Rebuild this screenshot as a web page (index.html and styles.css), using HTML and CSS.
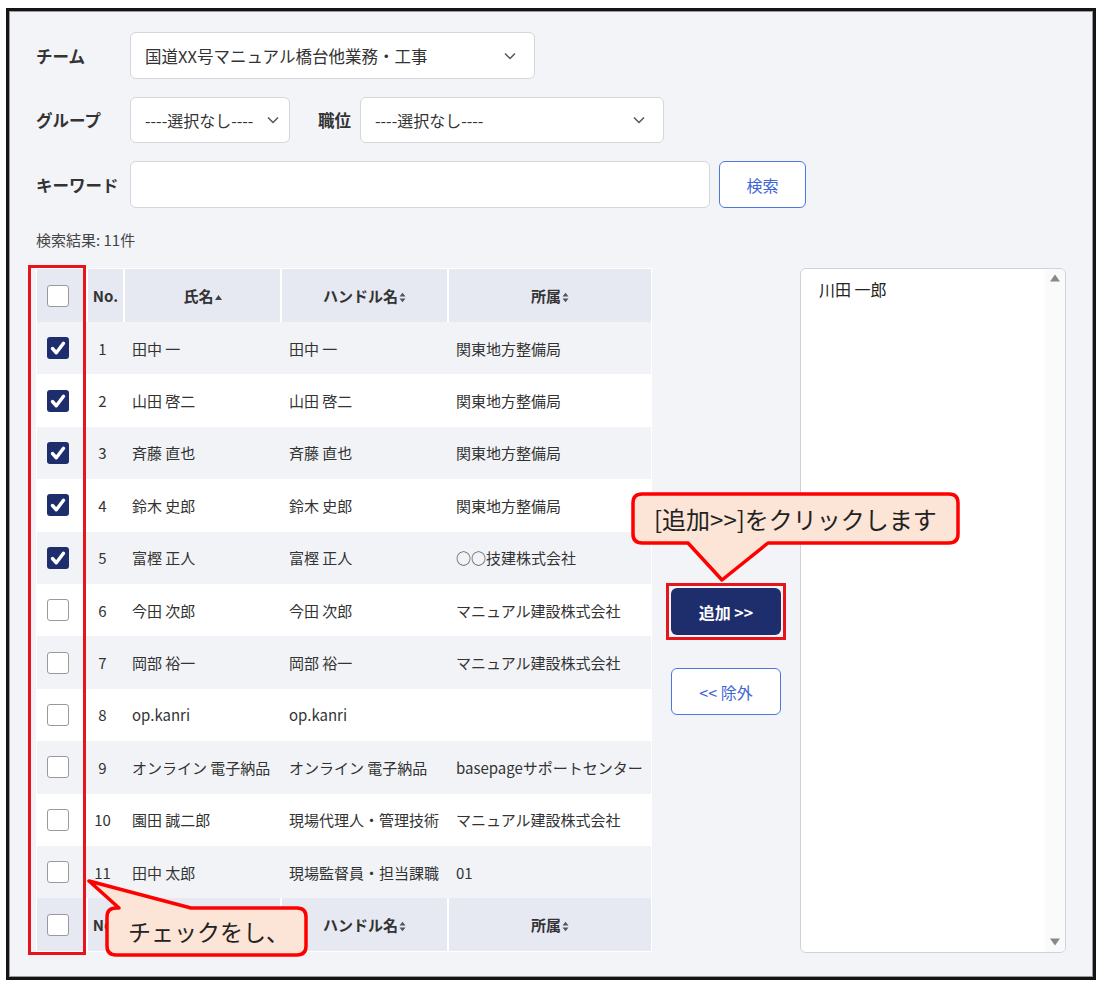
FILE: index.html
```html
<!DOCTYPE html>
<html lang="ja">
<head>
    <meta charset="UTF-8">
    <meta name="viewport" content="width=device-width, initial-scale=1.0">
    <title>メンバー選択</title>
    <link rel="stylesheet" href="styles.css">
</head>
<body>
    <div class="frame">
        <div class="form-row">
            <label class="label">チーム</label>
            <div class="select select-team">
                <span>国道XX号マニュアル橋台他業務・工事</span>
                <svg class="chevron" width="12" height="8" viewBox="0 0 12 8"><path d="M1 1.5 L6 6.5 L11 1.5" fill="none" stroke="#555" stroke-width="1.5"/></svg>
            </div>
        </div>
        <div class="form-row">
            <label class="label">グループ</label>
            <div class="select select-group">
                <span>----選択なし----</span>
                <svg class="chevron" width="12" height="8" viewBox="0 0 12 8"><path d="M1 1.5 L6 6.5 L11 1.5" fill="none" stroke="#555" stroke-width="1.5"/></svg>
            </div>
            <label class="label label-inline">職位</label>
            <div class="select select-post">
                <span>----選択なし----</span>
                <svg class="chevron" width="12" height="8" viewBox="0 0 12 8"><path d="M1 1.5 L6 6.5 L11 1.5" fill="none" stroke="#555" stroke-width="1.5"/></svg>
            </div>
        </div>
        <div class="form-row">
            <label class="label">キーワード</label>
            <div class="input"></div>
            <button class="btn-outline btn-search">検索</button>
        </div>

        <div class="result-count">検索結果: 11件</div>

        <div class="picker">
            <div class="table-wrap">
                <table class="member-table">
                    <thead>
                        <tr>
                            <th class="col-check"><span class="checkbox"></span></th>
                            <th class="col-no">No.</th>
                            <th class="col-name">氏名<svg class="sort" width="7" height="11" viewBox="0 0 7 11"><path d="M0 8 L3.5 3 L7 8Z" fill="#444"/></svg></th>
                            <th class="col-handle">ハンドル名<svg class="sort" width="7" height="11" viewBox="0 0 7 11"><path d="M0.5 4.5 L3.5 0.8 L6.5 4.5Z M0.5 6.5 L3.5 10.2 L6.5 6.5Z" fill="#555"/></svg></th>
                            <th class="col-org">所属<svg class="sort" width="7" height="11" viewBox="0 0 7 11"><path d="M0.5 4.5 L3.5 0.8 L6.5 4.5Z M0.5 6.5 L3.5 10.2 L6.5 6.5Z" fill="#555"/></svg></th>
                        </tr>
                    </thead>
                    <tbody>
                        <tr><td><span class="checkbox checked"></span></td><td class="no">1</td><td>田中 一</td><td>田中 一</td><td>関東地方整備局</td></tr>
                        <tr><td><span class="checkbox checked"></span></td><td class="no">2</td><td>山田 啓二</td><td>山田 啓二</td><td>関東地方整備局</td></tr>
                        <tr><td><span class="checkbox checked"></span></td><td class="no">3</td><td>斉藤 直也</td><td>斉藤 直也</td><td>関東地方整備局</td></tr>
                        <tr><td><span class="checkbox checked"></span></td><td class="no">4</td><td>鈴木 史郎</td><td>鈴木 史郎</td><td>関東地方整備局</td></tr>
                        <tr><td><span class="checkbox checked"></span></td><td class="no">5</td><td>富樫 正人</td><td>富樫 正人</td><td>○○技建株式会社</td></tr>
                        <tr><td><span class="checkbox"></span></td><td class="no">6</td><td>今田 次郎</td><td>今田 次郎</td><td>マニュアル建設株式会社</td></tr>
                        <tr><td><span class="checkbox"></span></td><td class="no">7</td><td>岡部 裕一</td><td>岡部 裕一</td><td>マニュアル建設株式会社</td></tr>
                        <tr><td><span class="checkbox"></span></td><td class="no">8</td><td>op.kanri</td><td>op.kanri</td><td></td></tr>
                        <tr><td><span class="checkbox"></span></td><td class="no">9</td><td>オンライン 電子納品</td><td>オンライン 電子納品</td><td>basepageサポートセンター</td></tr>
                        <tr><td><span class="checkbox"></span></td><td class="no">10</td><td>園田 誠二郎</td><td>現場代理人・管理技術</td><td>マニュアル建設株式会社</td></tr>
                        <tr><td><span class="checkbox"></span></td><td class="no">11</td><td>田中 太郎</td><td>現場監督員・担当課職</td><td>01</td></tr>
                    </tbody>
                    <tfoot>
                        <tr>
                            <th class="col-check"><span class="checkbox"></span></th>
                            <th class="col-no">No.</th>
                            <th class="col-name">氏名<svg class="sort" width="7" height="11" viewBox="0 0 7 11"><path d="M0 8 L3.5 3 L7 8Z" fill="#444"/></svg></th>
                            <th class="col-handle">ハンドル名<svg class="sort" width="7" height="11" viewBox="0 0 7 11"><path d="M0.5 4.5 L3.5 0.8 L6.5 4.5Z M0.5 6.5 L3.5 10.2 L6.5 6.5Z" fill="#555"/></svg></th>
                            <th class="col-org">所属<svg class="sort" width="7" height="11" viewBox="0 0 7 11"><path d="M0.5 4.5 L3.5 0.8 L6.5 4.5Z M0.5 6.5 L3.5 10.2 L6.5 6.5Z" fill="#555"/></svg></th>
                        </tr>
                    </tfoot>
                </table>
                <div class="mark-column"></div>
            </div>

            <div class="move-buttons">
                <div class="mark-button">
                    <button class="btn-primary">追加 &gt;&gt;</button>
                </div>
                <button class="btn-outline btn-remove">&lt;&lt; 除外</button>
            </div>

            <div class="selected-list">
                <div class="selected-items">
                    <div class="selected-item">川田 一郎</div>
                </div>
                <div class="scroll-bar">
                    <svg width="10" height="8" viewBox="0 0 10 8"><path d="M0 7.5 L5 0.5 L10 7.5Z" fill="#888"/></svg>
                    <svg width="10" height="8" viewBox="0 0 10 8"><path d="M0 0.5 L5 7.5 L10 0.5Z" fill="#888"/></svg>
                </div>
            </div>
        </div>

        <div class="callout callout-add">
            <svg class="callout-shape" width="332" height="94" viewBox="0 0 332 94">
                <path d="M12 3 H319 Q328 3 328 12 V43 Q328 52 319 52 H138 L92 89 L58 52 H12 Q3 52 3 43 V12 Q3 3 12 3 Z" fill="#fce4d6" stroke="#ff0000" stroke-width="3.5" stroke-linejoin="round"/>
            </svg>
            <div class="callout-text">[追加&gt;&gt;]をクリックします</div>
        </div>

        <div class="callout callout-check">
            <svg class="callout-shape" width="226" height="82" viewBox="0 0 226 82">
                <path d="M31 31 H34 L4 4 L106 31 H212 Q221 31 221 40 V69 Q221 78 212 78 H31 Q22 78 22 69 V40 Q22 31 31 31 Z" fill="#fce4d6" stroke="#ff0000" stroke-width="3.5" stroke-linejoin="round"/>
            </svg>
            <div class="callout-text">チェックをし、</div>
        </div>
    </div>
</body>
</html>
```

FILE: styles.css
```css
* {
    margin: 0;
    padding: 0;
    box-sizing: border-box;
}

body {
    font-family: "Noto Sans CJK JP", "Noto Sans", sans-serif;
    background-color: #fff;
    color: #333;
}

.frame {
    position: relative;
    width: 1090px;
    height: 972px;
    margin: 8px 0 0 6px;
    padding: 21px 27px 0 27px;
    border: 3px solid #141414;
    box-shadow: inset 0 0 0 1px #9a9a9a;
    background-color: #f3f4f8;
}

.form-row {
    display: flex;
    align-items: center;
    margin-bottom: 18px;
}

.label {
    width: 94px;
    font-size: 16.5px;
    font-weight: bold;
    color: #333;
}

.label-inline {
    width: auto;
    margin: 0 9px 0 28px;
}

.select {
    display: flex;
    align-items: center;
    justify-content: space-between;
    height: 47px;
    padding: 0 18px 0 14px;
    background-color: #fff;
    border: 1px solid #d3d6dc;
    border-radius: 6px;
    font-size: 16.5px;
    color: #333;
}

.select-team {
    width: 405px;
}

.select-group {
    width: 160px;
    height: 46px;
    padding-right: 10px;
    font-size: 16px;
}

.select-post {
    width: 304px;
    height: 46px;
    font-size: 16px;
}

.input {
    width: 580px;
    height: 47px;
    background-color: #fff;
    border: 1px solid #d3d6dc;
    border-radius: 6px;
}

.btn-outline {
    height: 47px;
    background-color: #fff;
    border: 1px solid #4c77e3;
    border-radius: 6px;
    color: #3f66d6;
    font-family: inherit;
    font-size: 16px;
}

.btn-search {
    width: 87px;
    margin-left: 9px;
}

.result-count {
    margin-top: 22px;
    line-height: 20px;
    font-size: 15px;
    color: #444;
}

.picker {
    display: flex;
    align-items: flex-start;
    margin-top: 18px;
}

.table-wrap {
    position: relative;
    width: 616px;
}

.member-table {
    width: 616px;
    table-layout: fixed;
    border-collapse: separate;
    border-spacing: 0;
    border: 1px solid #fff;
    font-size: 15px;
}

.member-table th {
    height: 53px;
    background-color: #e6e9f2;
    font-weight: bold;
    color: #333;
    text-align: center;
    vertical-align: middle;
}

.member-table th + th {
    border-left: 2px solid #fff;
}

.member-table td {
    height: 52.4px;
    padding: 0 9px;
    vertical-align: middle;
    white-space: nowrap;
    overflow: hidden;
}

.member-table tbody tr:nth-child(odd) {
    background-color: #f2f3f7;
}

.member-table tbody tr:nth-child(even) {
    background-color: #fff;
}

.col-check {
    width: 49px;
}

.col-no {
    width: 37px;
}

.col-name {
    width: 157px;
}

.col-handle {
    width: 167px;
}

.col-org {
    width: 204px;
}

.member-table th.col-check,
.member-table td:first-child {
    padding: 0 0 0 10px;
    text-align: left;
}

.member-table td.no {
    padding: 0 4px 0 0;
    text-align: center;
}

.sort {
    margin-left: 1px;
    vertical-align: -1px;
}

.checkbox {
    display: block;
    width: 22px;
    height: 22px;
    background-color: #fff;
    border: 1.5px solid #9a9a9a;
    border-radius: 3px;
}

.checkbox.checked {
    border: none;
    background: #1e2d6c url("data:image/svg+xml,%3Csvg xmlns='http://www.w3.org/2000/svg' width='22' height='22' viewBox='0 0 22 22'%3E%3Cpath d='M5.5 11.5 L9.3 15.8 L16.5 6.3' fill='none' stroke='white' stroke-width='3.4' stroke-linecap='round' stroke-linejoin='round'/%3E%3C/svg%3E") no-repeat center;
}

.mark-column {
    position: absolute;
    left: -8px;
    top: -3px;
    width: 58px;
    height: 690px;
    border: 3px solid #e8141c;
}

.move-buttons {
    display: flex;
    flex-direction: column;
    align-items: center;
    width: 148px;
    padding-top: 315px;
}

.mark-button {
    padding: 2px;
    border: 3px solid #e8141c;
}

.btn-primary {
    display: block;
    width: 110px;
    height: 47px;
    background-color: #1e2d6c;
    border: none;
    border-radius: 6px;
    color: #fff;
    font-family: inherit;
    font-size: 16px;
    font-weight: bold;
}

.btn-remove {
    width: 110px;
    margin-top: 28px;
    font-size: 16px;
}

.selected-list {
    display: flex;
    width: 266px;
    height: 685px;
    background-color: #fff;
    border: 1px solid #cfd2d8;
    border-radius: 6px;
    overflow: hidden;
}

.selected-items {
    flex: 1;
    padding: 9px 18px;
}

.selected-item {
    font-size: 16px;
    line-height: 22px;
    color: #222;
}

.scroll-bar {
    display: flex;
    flex-direction: column;
    justify-content: space-between;
    align-items: center;
    width: 20px;
    padding: 5px 0 6px;
    background-color: #fafafa;
}

.callout {
    position: absolute;
}

.callout-shape {
    position: absolute;
    left: 0;
    top: 0;
}

.callout-text {
    position: relative;
    font-size: 24px;
    color: #222;
    white-space: nowrap;
}

.callout-add {
    left: 621px;
    top: 480px;
    width: 332px;
    height: 94px;
}

.callout-add .callout-text {
    top: 3px;
    padding-left: 24px;
    line-height: 49px;
}

.callout-check {
    left: 76px;
    top: 866px;
    width: 226px;
    height: 82px;
}

.callout-check .callout-text {
    top: 31px;
    padding-left: 43px;
    line-height: 47px;
    font-size: 23px;
}
```
